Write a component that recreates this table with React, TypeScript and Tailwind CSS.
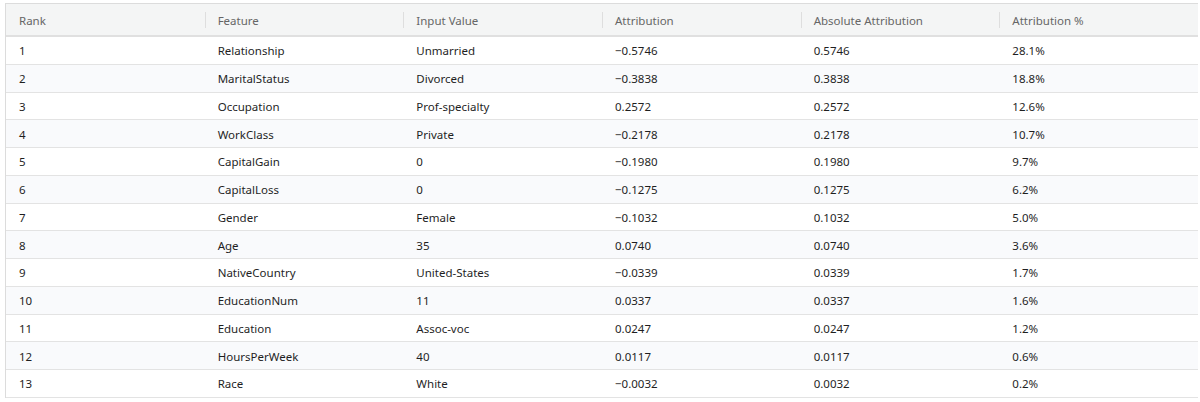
const columns = ["Rank", "Feature", "Input Value", "Attribution", "Absolute Attribution", "Attribution %"];

const rows = [
  { rank: 1, feature: "Relationship", value: "Unmarried", attr: "−0.5746", abs: "0.5746", pct: "28.1%" },
  { rank: 2, feature: "MaritalStatus", value: "Divorced", attr: "−0.3838", abs: "0.3838", pct: "18.8%" },
  { rank: 3, feature: "Occupation", value: "Prof-specialty", attr: "0.2572", abs: "0.2572", pct: "12.6%" },
  { rank: 4, feature: "WorkClass", value: "Private", attr: "−0.2178", abs: "0.2178", pct: "10.7%" },
  { rank: 5, feature: "CapitalGain", value: "0", attr: "−0.1980", abs: "0.1980", pct: "9.7%" },
  { rank: 6, feature: "CapitalLoss", value: "0", attr: "−0.1275", abs: "0.1275", pct: "6.2%" },
  { rank: 7, feature: "Gender", value: "Female", attr: "−0.1032", abs: "0.1032", pct: "5.0%" },
  { rank: 8, feature: "Age", value: "35", attr: "0.0740", abs: "0.0740", pct: "3.6%" },
  { rank: 9, feature: "NativeCountry", value: "United-States", attr: "−0.0339", abs: "0.0339", pct: "1.7%" },
  { rank: 10, feature: "EducationNum", value: "11", attr: "0.0337", abs: "0.0337", pct: "1.6%" },
  { rank: 11, feature: "Education", value: "Assoc-voc", attr: "0.0247", abs: "0.0247", pct: "1.2%" },
  { rank: 12, feature: "HoursPerWeek", value: "40", attr: "0.0117", abs: "0.0117", pct: "0.6%" },
  { rank: 13, feature: "Race", value: "White", attr: "−0.0032", abs: "0.0032", pct: "0.2%" },
];

export default function App() {
  return (
    <div className="min-h-[402px] bg-white pl-[5px] pt-[3px] font-['Noto_Sans',sans-serif] text-[11.5px]">
      <div className="w-[1193px] border-l border-t border-[#dcdcdc]">
        <div className="grid h-[33px] grid-cols-6 border-b-2 border-[#e0e0e0] bg-[#f4f5f5] text-[#666666]">
          {columns.map((col, i) => (
            <div key={col} className="relative flex items-center pl-[13px] pt-[2px]">
              {i > 0 && <span className="absolute left-0 top-[8px] h-[16px] w-px bg-[#dedede]" />}
              {col}
            </div>
          ))}
        </div>
        {rows.map((row, i) => (
          <div
            key={row.rank}
            className={`grid h-[27.75px] grid-cols-6 border-b border-[#e3e3e3] text-[#1f1f1f] ${i % 2 === 1 ? "bg-[#f9fafc]" : "bg-white"}`}
          >
            {[row.rank, row.feature, row.value, row.attr, row.abs, row.pct].map((cell, j) => (
              <div key={j} className="flex items-center pl-[13px] pt-[1px]">
                {cell}
              </div>
            ))}
          </div>
        ))}
      </div>
    </div>
  );
}
